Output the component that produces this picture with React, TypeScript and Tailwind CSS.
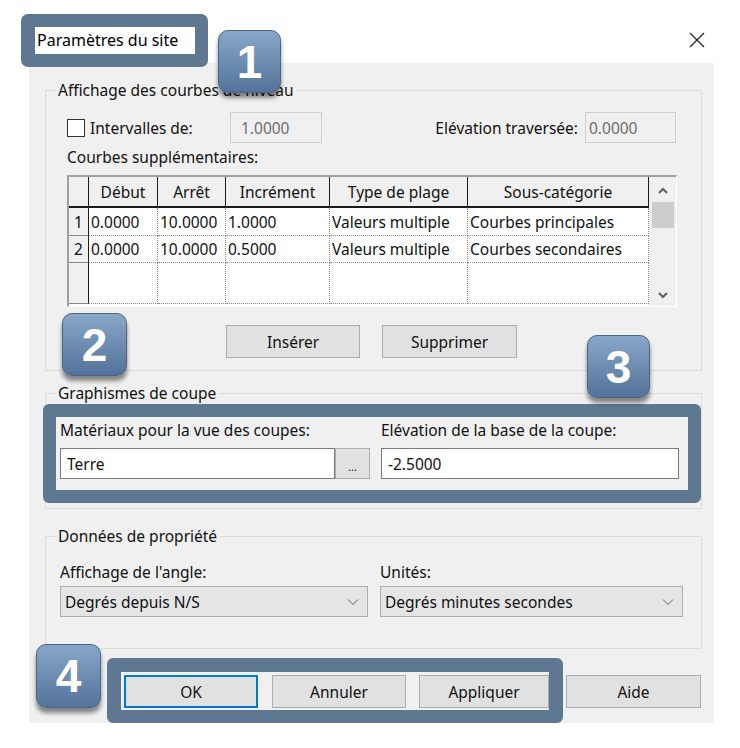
import React from "react";

function Badge({ n, className }: { n: string; className: string }) {
  return (
    <div
      className={`absolute z-20 flex items-center justify-center rounded-[10px] border border-[#4a6584] bg-linear-to-b from-[#88a7c8] to-[#55739a] font-['Liberation_Sans',Arial,sans-serif] text-[46px] font-bold leading-none text-white shadow-[0_5px_4px_rgba(0,0,0,0.45)] ${className}`}
    >
      {n}
    </div>
  );
}

function Btn({
  children,
  className = "",
  focus = false,
}: {
  children: React.ReactNode;
  className?: string;
  focus?: boolean;
}) {
  const edge = focus ? "border-2 border-[#0078d7]" : "border border-[#adadad]";
  return (
    <div className={`flex h-[33px] items-center justify-center bg-[#e1e1e1] ${edge} ${className}`}>
      {children}
    </div>
  );
}

function Chevron() {
  return (
    <svg width="12" height="8" viewBox="0 0 12 8" className="shrink-0">
      <path d="M1 1.5 L6 6.5 L11 1.5" fill="none" stroke="#606060" strokeWidth="1" />
    </svg>
  );
}

function Select({ value, className }: { value: string; className: string }) {
  return (
    <div className={`flex h-[31px] items-center justify-between border border-[#adadad] bg-[#e5e5e5] pl-[4px] pr-[8px] ${className}`}>
      <span>{value}</span>
      <Chevron />
    </div>
  );
}

const headers = ["Début", "Arrêt", "Incrément", "Type de plage", "Sous-catégorie"];
const rows = [
  ["1", "0.0000", "10.0000", "1.0000", "Valeurs multiple", "Courbes principales"],
  ["2", "0.0000", "10.0000", "0.5000", "Valeurs multiple", "Courbes secondaires"],
  ["", "", "", "", "", ""],
];
const rowH = ["h-[28px]", "h-[27px]", "h-[41px]"];

function Table() {
  return (
    <div className="ml-[21px] mt-[8px] flex h-[132px] w-[610px] border-t-2 border-l-2 border-t-[#a0a0a0] border-l-[#a0a0a0] border-r border-b border-r-white border-b-white">
      <div className="w-[580px] bg-white">
        <div className="grid grid-cols-[20px_69px_68px_104px_138px_181px]">
          <div className="h-[31px] border-r border-b-2 border-[#1a1a1a] bg-[#f0f0f0]" />
          {headers.map((h) => (
            <div
              key={h}
              className="flex h-[31px] items-center justify-center border-r border-b-2 border-[#1a1a1a] bg-[#f0f0f0]"
            >
              {h}
            </div>
          ))}
          {rows.map((r, i) =>
            r.map((c, j) =>
              j === 0 ? (
                <div
                  key={`${i}-${j}`}
                  className={`flex items-center justify-center border-r border-b border-r-[#1a1a1a] border-b-[#8a8a8a] bg-[#f0f0f0] ${rowH[i]}`}
                >
                  {c}
                </div>
              ) : (
                <div
                  key={`${i}-${j}`}
                  className={`flex items-center overflow-hidden whitespace-nowrap border-r border-b border-dotted border-[#8a8a8a] pl-[2px] ${rowH[i]}`}
                >
                  {c}
                </div>
              )
            )
          )}
        </div>
      </div>
      <div className="flex w-[28px] flex-col items-center bg-[#f0f0f0]">
        <svg width="12" height="8" viewBox="0 0 12 8" className="mt-[10px]">
          <path d="M2 6 L6 2 L10 6" fill="none" stroke="#606060" strokeWidth="2" />
        </svg>
        <div className="mt-[7px] h-[26px] w-[22px] bg-[#cdcdcd]" />
        <div className="flex-1" />
        <svg width="12" height="8" viewBox="0 0 12 8" className="mb-[7px]">
          <path d="M2 2 L6 6 L10 2" fill="none" stroke="#606060" strokeWidth="2" />
        </svg>
      </div>
    </div>
  );
}

export default function App() {
  return (
    <div className="relative h-[748px] w-[740px] overflow-hidden bg-white font-['Noto_Sans',sans-serif] text-[15.5px] leading-[20px] text-[#111]">
      {/* title bar */}
      <div className="flex h-[63px] items-start pl-[21px] pt-[14px]">
        <div className="relative z-10 h-[53px] w-[187px] rounded-[7px] bg-[#5f7892] pl-[14px] pt-[13px]">
          <div className="h-[27px] w-[160px] bg-white pl-[2px] text-[16px] leading-[27px] text-black">
            Paramètres du site
          </div>
        </div>
        <svg width="16" height="16" viewBox="0 0 16 16" className="ml-auto mr-[35px] mt-[18px]">
          <path d="M1 1 L15 15 M15 1 L1 15" stroke="#222" strokeWidth="1.3" />
        </svg>
      </div>

      {/* dialog body */}
      <div className="ml-[29px] h-[660px] w-[685px] bg-[#f0f0f0] pl-[16px] pr-[12px] pt-[17px]">
        <fieldset className="h-[291px] border border-[#dcdcdc]">
          <legend className="ml-[9px] px-[3px]">Affichage des courbes de niveau</legend>
          <div className="mt-[12px] flex h-[31px] items-center">
            <div className="ml-[21px] flex w-[163px] items-center">
              <div className="h-[18px] w-[18px] border border-[#333] bg-white" />
              <span className="ml-[5px]">Intervalles de:</span>
            </div>
            <div className="flex h-[31px] w-[92px] items-center border border-[#d0d0d0] bg-[#f0f0f0] pl-[10px] text-[#6d6d6d]">
              1.0000
            </div>
            <div className="mr-[25px] flex flex-1 items-center justify-end">
              <span className="mr-[7px]">Elévation traversée:</span>
              <div className="flex h-[31px] w-[91px] items-center border border-[#d0d0d0] bg-[#f0f0f0] pl-[3px] text-[#6d6d6d]">
                0.0000
              </div>
            </div>
          </div>
          <div className="ml-[21px] mt-[4px] h-[20px]">Courbes supplémentaires:</div>
          <Table />
          <div className="mt-[18px] flex">
            <Btn className="ml-[180px] w-[134px]">Insérer</Btn>
            <Btn className="ml-[22px] w-[135px]">Supprimer</Btn>
          </div>
        </fieldset>

        <fieldset className="mt-[12px] h-[126px] border border-[#dcdcdc]">
          <legend className="ml-[9px] px-[3px]">Graphismes de coupe</legend>
          <div className="-ml-[3px] mt-[1px] flex h-[99px] w-[658px] rounded-[6px] border-[13px] border-[#5f7892] pl-[4px] pt-[3px]">
            <div className="w-[310px]">
              <div className="h-[20px]">Matériaux pour la vue des coupes:</div>
              <div className="mt-[8px] flex">
                <div className="flex h-[31px] w-[275px] items-center border border-[#7a7a7a] bg-white pl-[6px]">Terre</div>
                <div className="flex h-[31px] w-[35px] items-end justify-center border border-[#adadad] bg-[#e1e1e1] pb-[6px] text-[11px] leading-none">
                  ...
                </div>
              </div>
            </div>
            <div className="ml-[11px] w-[298px]">
              <div className="h-[20px]">Elévation de la base de la coupe:</div>
              <div className="mt-[8px] flex h-[31px] items-center border border-[#7a7a7a] bg-white pl-[6px]">-2.5000</div>
            </div>
          </div>
        </fieldset>

        <fieldset className="mt-[17px] h-[123px] border border-[#dcdcdc]">
          <legend className="ml-[9px] px-[3px]">Données de propriété</legend>
          <div className="ml-[14px] mt-[16px] flex">
            <div className="w-[308px]">
              <div className="h-[20px]">Affichage de l'angle:</div>
              <Select value="Degrés depuis N/S" className="mt-[4px]" />
            </div>
            <div className="ml-[12px] w-[303px]">
              <div className="h-[20px]">Unités:</div>
              <Select value="Degrés minutes secondes" className="mt-[4px]" />
            </div>
          </div>
        </fieldset>

        <div className="mt-[9px] flex items-start">
          <div className="ml-[62px] flex h-[65px] w-[456px] rounded-[6px] border-[14px] border-b-[13px] border-[#5f7892] pl-[3px] pt-[3px]">
            <Btn focus className="w-[134px]">OK</Btn>
            <Btn className="ml-[14px] w-[134px]">Annuler</Btn>
            <Btn className="ml-[13px] w-[130px]">Appliquer</Btn>
          </div>
          <Btn className="ml-[3px] mt-[17px] w-[135px]">Aide</Btn>
        </div>
      </div>

      <Badge n="1" className="left-[218px] top-[30px] h-[63px] w-[63px]" />
      <Badge n="2" className="left-[62px] top-[313px] h-[63px] w-[65px]" />
      <Badge n="3" className="left-[587px] top-[335px] h-[63px] w-[63px]" />
      <Badge n="4" className="left-[36px] top-[644px] h-[64px] w-[65px]" />
    </div>
  );
}
